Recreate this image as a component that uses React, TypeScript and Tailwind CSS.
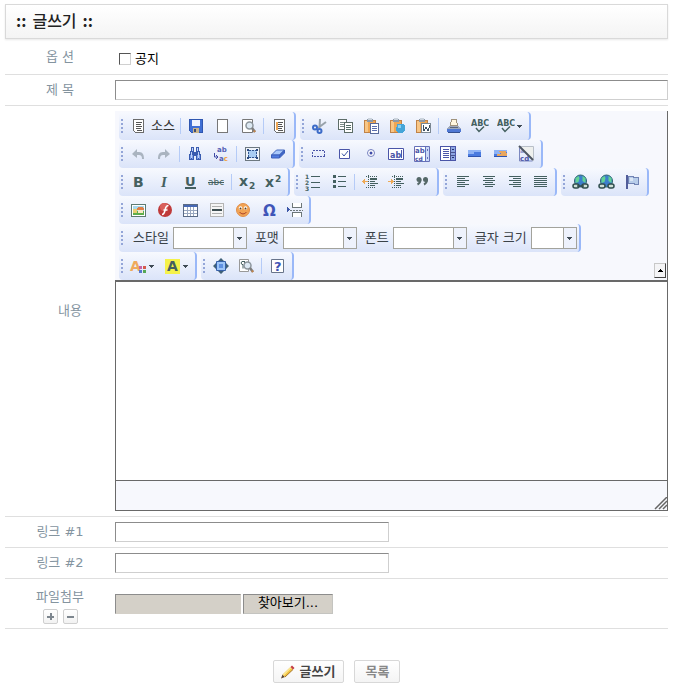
import React, { JSX, ReactNode, useState } from "react";

const INK = "#446060";
const NAVY = "#4a55a8";

const Svg = ({ children, crisp = true }: { children: ReactNode; crisp?: boolean }): JSX.Element => (
  <svg
    width="18"
    height="18"
    viewBox="0 0 18 18"
    fill="none"
    shapeRendering={crisp ? "crispEdges" : "auto"}
    fontFamily="'DejaVu Sans', sans-serif"
    fontWeight="bold"
    aria-hidden="true"
  >
    {children}
  </svg>
);

const Page = ({ accent }: { accent?: string }) => (
  <Svg>
    <path d="M4.5 2.5h10v13h-8l-2-2z" fill="#fff" stroke="#6b6b6b" />
    <path d="M7 5.5h6M7 7.5h5M7 9.5h6M7 11.5h5M8 13.5h5" stroke="#555" />
    {accent && <path d="M7 5v8" stroke={accent} strokeWidth="2" />}
  </Svg>
);

const Save = () => (
  <Svg>
    <path d="M2 2h14v14H4l-2-2z" fill="#3f6fd4" />
    <path d="M2.5 2.5h13v13h-11l-2-2z" stroke="#2f56b0" />
    <path d="M5 3h8v6H5z" fill="#eef3ff" />
    <path d="M6 11h6v5H6z" fill="#c9b48a" />
    <path d="M7 12h2v3H7z" fill="#3a4a72" />
  </Svg>
);

const NewPage = () => (
  <Svg>
    <path d="M4.5 2.5h10v13h-10z" fill="#fff" stroke="#777" />
  </Svg>
);

const Magnifier = () => (
  <>
    <circle cx="10.5" cy="8.5" r="3.5" fill="#dce8f2" stroke="#8c959c" strokeWidth="1.5" />
    <path d="M13 11l3 4" stroke="#7d7d7d" strokeWidth="2.5" />
    <path d="M15 13.5l1 1.5" stroke="#c8864a" strokeWidth="2" />
  </>
);

const Preview = () => (
  <Svg crisp={false}>
    <path d="M3.5 2.5h10v13h-10z" fill="#fff" stroke="#777" />
    <Magnifier />
  </Svg>
);

const ShowBlocks = () => (
  <Svg crisp={false}>
    <path d="M2.5 2.5h9v12h-9z" fill="#fff" stroke="#999" />
    <path d="M7 4.500h-2c-1 0-1 3 0 3h1v4M7.500 4v7" stroke="#446060" />
    <Magnifier />
  </Svg>
);

const Undo = ({ flip }: { flip?: boolean }) => (
  <Svg crisp={false}>
    <g transform={flip ? "matrix(-1 0 0 1 18 0)" : undefined}>
      <path d="M3 9l5-5v3h2c4 0 5 3 5 7h-2c0-3-1-4-3-4H8v3z" fill="#aab4c0" />
    </g>
  </Svg>
);

const Find = () => (
  <Svg>
    <path d="M5 2h3v4H5zM10 2h3v4h-3zM4 6h4v3H4zM10 6h4v3h-4zM3 9h5v6H3zM10 9h5v6h-5zM8 7h2v4H8z" fill="#3a5cb0" />
    <path d="M6 3h1v3H6zM11 3h1v3h-1zM5 7h1v6H5zM12 7h1v6h-1z" fill="#c2d5fa" />
    <path d="M4 10h1v4H4zM6 10h1v4H6zM11 10h1v4h-1zM13 10h1v4h-1z" fill="#7fa0ea" />
  </Svg>
);

const Replace = () => (
  <Svg crisp={false}>
    <text x="5" y="7" fontSize="7" fill="#5560b5">ab</text>
    <text x="7" y="16" fontSize="7" fill="#5560b5">
      a<tspan fill="#f0a040">c</tspan>
    </text>
    <path d="M2.500 8v4h3M4 10l2 2-2 2" stroke="#3f49a5" />
  </Svg>
);

const SelectAll = () => (
  <Svg>
    <path d="M2.5 2.5h14v13h-14z" fill="#eef3fa" stroke="#6d7880" />
    <path d="M5 5h9v8H5z" fill="#a9cdf3" />
    <path d="M5.5 5.5h8v7h-8z" stroke="#33558f" strokeDasharray="2 1" />
    <path d="M4 4h2v2H4zM13 4h2v2h-2zM4 12h2v2H4zM13 12h2v2h-2z" fill="#2d4b80" />
  </Svg>
);

const Eraser = () => (
  <Svg crisp={false}>
    <path d="M7.5 5h8l-5 5h-8z" fill="#a9c8fa" stroke="#4468bd" />
    <path d="M2.5 10h8v3h-8z" fill="#4f7be0" stroke="#3d5fba" />
    <path d="M10.5 10l5-5v3l-5 5z" fill="#3f66c8" stroke="#3d5fba" />
  </Svg>
);

const Cut = () => (
  <Svg crisp={false}>
    <path d="M10 2l-.5 9M16 5L8 11" stroke="#98a2aa" strokeWidth="2" />
    <circle cx="5" cy="10.500" r="2" stroke="#3d6cc8" strokeWidth="2" />
    <circle cx="9.500" cy="14" r="2" stroke="#3d6cc8" strokeWidth="2" />
  </Svg>
);

const Copy = () => (
  <Svg>
    <path d="M2.5 2.5h8v10h-8z" fill="#fff" stroke="#5d6d68" />
    <path d="M4 5.5h5M4 7.5h4M4 9.5h4" stroke="#7b8b86" />
    <path d="M8.5 5.5h8v10h-8z" fill="#fff" stroke="#5d6d68" />
    <path d="M10 8.5h5M10 10.5h5M10 12.5h5" stroke="#557068" />
  </Svg>
);

const Paste = ({ kind }: { kind: "page" | "text" | "word" }) => (
  <Svg>
    <path d="M2.5 3.5h11v12h-11z" fill="#efa653" stroke="#c08348" />
    <path d="M3 4h3v11H3z" fill="#f8c686" />
    <path d="M5 2h6v3H5z" fill="#8c99a8" />
    <path d="M6 1h4v2H6z" fill="#cbd3dc" />
    {kind === "page" && (
      <>
        <path d="M8.5 6.5h8v10h-8z" fill="#fff" stroke="#586a9a" />
        <path d="M10 9.5h5M10 11.5h5M10 13.5h5" stroke="#5a6dae" />
      </>
    )}
    {kind === "text" && (
      <>
        <path d="M9 7h6l2 2v5l-3 2h-4l-2-3z" fill="#45a5d8" />
        <path d="M10 8h3v3h-3z" fill="#8bd0ef" />
      </>
    )}
    {kind === "word" && (
      <>
        <path d="M7.5 6.5h9v9h-9z" fill="#fff" stroke="#7b8792" />
        <path d="M9 8v3l1 3 2-4 2 4 1-3V8" stroke="#3d4f60" />
      </>
    )}
  </Svg>
);

const Print = () => (
  <Svg>
    <path d="M6.5 2.5h5l1 6h-7z" fill="#fff6df" stroke="#a0937c" />
    <path d="M4 9h10l2 3H2z" fill="#a0aabd" />
    <path d="M2 12h14v3H2z" fill="#4f78d4" />
    <path d="M3 15h12v1H3z" fill="#34508f" />
    <path d="M5 10h8v1H5z" fill="#5b6578" />
  </Svg>
);

const Spell = () => (
  <Svg crisp={false}>
    <text x="0" y="9" fontSize="8" fill={INK}>ABC</text>
    <path d="M5 11l3 3.500 5-5" stroke={INK} strokeWidth="1.5" />
  </Svg>
);

const FormIcon = () => (
  <Svg>
    <path d="M3.500 5.500h12v6h-12z" stroke={NAVY} strokeDasharray="2 1" />
  </Svg>
);

const CheckIcon = () => (
  <Svg crisp={false}>
    <path d="M4.5 4.5h10v9h-10z" fill="#fff" stroke={NAVY} />
    <path d="M7 8.500l2 2.500 4-5" stroke="#3b55a5" />
  </Svg>
);

const RadioIcon = () => (
  <Svg crisp={false}>
    <circle cx="10" cy="8" r="3.5" fill="#fff" stroke="#7580c0" />
    <circle cx="10" cy="8" r="1.5" fill="#3f4ba8" />
  </Svg>
);

const FieldIcon = () => (
  <Svg crisp={false}>
    <path d="M1.500 3.500h15v11h-15z" fill="#fff" stroke={NAVY} />
    <text x="3" y="13" fontSize="8" fill={NAVY}>ab</text>
    <path d="M14.500 5v8" stroke={NAVY} />
  </Svg>
);

const AreaIcon = () => (
  <Svg crisp={false}>
    <path d="M1.500 1.500h15v15h-15z" fill="#fff" stroke="#6570b8" />
    <text x="2" y="8" fontSize="7" fill={NAVY}>ab</text>
    <text x="2" y="16" fontSize="6" fill={NAVY}>cd</text>
    <path d="M12.500 2v14" stroke="#6570b8" />
    <path d="M13 2h3v14h-3z" fill="#c9d8f7" />
    <path d="M14 4h1v2h-1zM14 12h1v2h-1z" fill="#6570b8" />
  </Svg>
);

const ListFieldIcon = () => (
  <Svg>
    <path d="M1.5 1.5h15v14h-15z" fill="#fff" stroke={NAVY} />
    <path d="M4 4.5h6M4 6.5h6M4 8.5h6M4 10.5h6M4 12.5h6" stroke={NAVY} />
    <path d="M12 2h4v13h-4z" fill="#8ca5e3" />
    <path d="M13 4h2v1h-2zM13 12h2v1h-2z" fill="#26356f" />
    <path d="M12 7.5h4M12 10.5h4M11.500 2v13" stroke="#4a5590" />
  </Svg>
);

const ButtonIcon = ({ picture }: { picture?: boolean }) => (
  <Svg>
    <path d="M3 5h13v7H3z" fill="#4a7be0" />
    <path d="M3 5h13v2H3zM3 7h6v2H3z" fill="#8fb3f5" />
    <path d="M3 11h13v1H3z" fill="#2f54b0" />
    {picture && <path d="M8 6h7v2h1v3H6V9h4z" fill="#e9a75f" />}
  </Svg>
);

const HiddenIcon = () => (
  <Svg crisp={false}>
    <path d="M2.500 3v13h13" stroke="#7c88c0" />
    <text x="3" y="8" fontSize="6" fill="#8a94c8">a</text>
    <text x="3" y="16" fontSize="7" fill={NAVY}>cd</text>
    <path d="M3 1.500h13.500v14z" fill="#eef0ee" stroke="#b8bfc8" />
    <path d="M2 1l14 14" stroke="#4d5662" strokeWidth="2" />
  </Svg>
);

const Glyph = ({ kind }: { kind: string }) => (
  <Svg crisp={false}>
    {kind === "B" && <text x="4" y="14" fontSize="14" fill={INK}>B</text>}
    {kind === "I" && <text x="6" y="14" fontSize="15" fill={INK} fontStyle="italic" fontFamily="'Liberation Serif', serif">I</text>}
    {kind === "U" && (
      <>
        <text x="4" y="13" fontSize="13" fill={INK}>U</text>
        <path d="M4 15h11" stroke={INK} strokeWidth="2" />
      </>
    )}
    {kind === "S" && (
      <>
        <text x="1" y="12" fontSize="9" fontWeight="normal" fill={INK}>abc</text>
        <path d="M1 9.5h16" stroke={INK} />
      </>
    )}
    {(kind === "sub" || kind === "sup") && (
      <>
        <text x="1" y={kind === "sub" ? 13 : 14} fontSize="14" fill={INK}>x</text>
        <text x="11" y={kind === "sub" ? 16 : 9} fontSize="9" fill={INK}>2</text>
      </>
    )}
  </Svg>
);

const NumberList = () => (
  <Svg crisp={false}>
    <text x="1" y="6" fontSize="6" fill={INK}>1</text>
    <text x="1" y="12" fontSize="6" fill={INK}>2</text>
    <text x="1" y="18" fontSize="6" fill={INK}>3</text>
    <path d="M7 3.5h9M7 9.5h9M7 14.5h9" stroke={INK} />
  </Svg>
);

const BulletList = () => (
  <Svg>
    <path d="M3 2h3v3H3zM3 7h3v3H3zM3 12h3v3H3z" fill={INK} />
    <path d="M8 3.5h8M8 8.5h8M8 13.5h8" stroke={INK} />
  </Svg>
);

const Indent = ({ out }: { out?: boolean }) => (
  <Svg>
    <path d="M5 3.5h12M5 14.5h9" stroke={INK} strokeDasharray="1 1" />
    <path d="M9 5h7v2H9zM9 8h5v1H9zM9 10h8v1H9zM9 12h5v1H9z" fill={INK} />
    <path d="M7.5 2v13" stroke={INK} strokeDasharray="1 1" />
    {out ? (
      <path d="M1 8.5h6M3.5 6v5M2.5 7v3" stroke="#efaa57" />
    ) : (
      <path d="M1 8.5h6M4.5 6v5M5.5 7v3" stroke="#efaa57" />
    )}
  </Svg>
);

const Quote = () => (
  <Svg crisp={false}>
    <circle cx="6" cy="6.5" r="2.5" fill="#556868" />
    <circle cx="12.5" cy="6.5" r="2.5" fill="#556868" />
    <path d="M7.500 6.500c0 2.500-1 4-3 5M14 6.500c0 2.500-1 4-3 5" stroke="#556868" strokeWidth="2" />
  </Svg>
);

const Align = ({ d }: { d: string }) => (
  <Svg>
    <path d={d} stroke={INK} />
  </Svg>
);

const Link = ({ broken }: { broken?: boolean }) => (
  <Svg crisp={false}>
    <circle cx="9.5" cy="8" r="6" fill="#3d7fcb" stroke="#2d6570" />
    <path d="M4.500 5l3-2 1 2-1 4-3 1zM11.500 3l3 2v5l-3-2z" fill="#63d394" />
    <rect x="2" y="11" width="6" height="4" rx="2" fill="#cfe0d8" stroke="#304e4e" strokeWidth="1.5" />
    <rect x="11" y="11" width="6" height="4" rx="2" fill="#cfe0d8" stroke="#304e4e" strokeWidth="1.5" />
    {!broken && <path d="M6 13h7" stroke="#304e4e" strokeWidth="1.5" />}
  </Svg>
);

const Anchor = () => (
  <Svg>
    <path d="M3 2h2v14H3z" fill="#525d9a" />
    <path d="M5.5 3.5h5v1h5v7h-4v-1h-6z" fill="#b8cdea" stroke="#7184b5" />
    <path d="M7 5h3v3H7z" fill="#dae6f5" />
  </Svg>
);

const Picture = () => (
  <Svg>
    <path d="M2.5 3.5h14v12h-14z" fill="#fff" stroke="#5d7a72" />
    <path d="M4 5h11v5H4z" fill="#a8d8ed" />
    <path d="M4 10h11v4H4z" fill="#5fae4c" />
    <path d="M4 8h4v4H4z" fill="#e8cf72" />
    <path d="M9 6h5v1h1v2H8V7h1z" fill="#df7e48" />
    <path d="M9 9h5v3H9z" fill="#f8e8c8" />
  </Svg>
);

const Flash = () => (
  <Svg crisp={false}>
    <circle cx="10" cy="9" r="7" fill="#bf3a3a" />
    <circle cx="9" cy="6" r="4" fill="#d9605c" />
    <path d="M13.500 4.500c-3 0-3 3-3.500 5s-1 4-3 4M8.500 9h4" stroke="#fff" strokeWidth="1.5" />
  </Svg>
);

const TableIcon = () => (
  <Svg>
    <path d="M2.5 3.5h14v12h-14z" fill="#fff" stroke="#5a6a85" />
    <path d="M3 4h13v2H3z" fill="#4668b5" />
    <path d="M3 9.5h13M3 12.5h13M6.5 6v9M9.5 6v9M12.5 6v9" stroke="#9aa8c0" />
  </Svg>
);

const Rule = () => (
  <Svg>
    <path d="M3.5 2.5h13v13h-13z" fill="#f5f5f5" stroke="#b4b4b4" />
    <path d="M5 5.5h10M5 12.5h10" stroke="#b0b0b0" />
    <path d="M5 9h10" stroke="#3d4d50" strokeWidth="2" />
  </Svg>
);

const Smiley = () => (
  <Svg crisp={false}>
    <circle cx="10" cy="9" r="6.5" fill="#f2a354" stroke="#e08f4c" />
    <circle cx="7.5" cy="7" r="1.800" fill="#fff" />
    <circle cx="12.500" cy="7" r="1.800" fill="#fff" />
    <circle cx="7.500" cy="7.500" r="1" fill="#604020" />
    <circle cx="12.500" cy="7.500" r="1" fill="#604020" />
    <path d="M6.500 11c2 2.500 5 2.500 7 0" stroke="#a83e28" />
  </Svg>
);

const Omega = () => (
  <Svg crisp={false}>
    <text x="4" y="15" fontSize="15" fill="#3f55b8">Ω</text>
  </Svg>
);

const PageBreak = () => (
  <Svg>
    <path d="M7.5 2v4.5h9V2M7.5 16v-4.5h9V16" fill="#fff" stroke="#6c7678" />
    <path d="M5 9h13" stroke="#6c7678" strokeDasharray="2 1" />
    <path d="M2 6v5l3-2.5z" fill="#3d57a8" />
  </Svg>
);

const TextColor = () => (
  <Svg crisp={false}>
    <text x="1" y="14" fontSize="14" fill="#efaa5c">A</text>
    <path d="M10 9h3v3h-3z" fill="#c565a8" />
    <path d="M14 9h3v3h-3z" fill="#d55a4b" />
    <path d="M10 13h3v3h-3z" fill="#5876cf" />
    <path d="M14 13h3v3h-3z" fill="#56a854" />
  </Svg>
);

const BackColor = () => (
  <Svg crisp={false}>
    <path d="M2 2h15v15H2z" fill="#f5f24a" />
    <text x="4" y="14" fontSize="14" fill={INK}>A</text>
  </Svg>
);

const Maximize = () => (
  <Svg crisp={false}>
    <path d="M10 1l3 3H7zM10 17l3-3H7zM2 9l3-3v6zM18 9l-3-3v6z" fill="#3f6077" />
    <path d="M5.5 4.5h9v9h-9z" fill="#9cc4f8" stroke="#3560a8" />
    <path d="M8 7h4v4H8z" fill="#5f91e2" />
  </Svg>
);

const About = () => (
  <Svg crisp={false}>
    <path d="M3.5 2.5h12v13h-12z" fill="#fff" stroke="#68748a" />
    <text x="6" y="14" fontSize="13" fill="#4053b5">?</text>
  </Svg>
);

const Pencil = () => (
  <svg width="16" height="16" viewBox="0 0 16 16" aria-hidden="true">
    <path d="M1 14.500l1.500-4L5 13z" fill="#5a4432" />
    <path d="M2.500 10.500L10.500 3 13 5.500 5 13z" fill="#f2c443" />
    <path d="M3 10.500L10.500 3l1 1L4 11.500z" fill="#fbe795" />
    <path d="M5 13l8-7.500" stroke="#a87628" />
    <path d="M10.500 3l1.500-1.500 2.500 2.500L13 5.500z" fill="#c23b42" />
  </svg>
);

const Caret = () => (
  <svg width="5" height="3" viewBox="0 0 5 3" shapeRendering="crispEdges" aria-hidden="true">
    <path d="M0 0h5v1H4v1H3v1H2V2H1V1H0z" fill="#3f4b55" />
  </svg>
);

const Tool = ({ title, children }: { title: string; children: ReactNode }) => (
  <button type="button" title={title} className="flex h-7 w-[26px] items-center justify-center">
    {children}
  </button>
);

const MenuTool = ({ title, children }: { title: string; children: ReactNode }) => (
  <button type="button" title={title} className="flex h-7 w-[34px] items-center gap-0.5 pl-1">
    {children}
    <Caret />
  </button>
);

const Sep = () => (
  <span className="flex w-[5px] justify-center">
    <span className="h-4 w-px bg-[#b5cbf7]" />
  </span>
);

const Group = ({ children }: { children: ReactNode }) => (
  <div className="flex h-7 items-center rounded-[4px] border-r-2 border-[#9ab8f8] bg-linear-to-b from-[#f7f9fe] to-[#dbe4f9] pr-0.5">
    <span className="flex w-1.5 flex-col items-center gap-0.5">
      <span className="size-0.5 bg-[#94a6d8]" />
      <span className="size-0.5 bg-[#94a6d8]" />
      <span className="size-0.5 bg-[#94a6d8]" />
      <span className="size-0.5 bg-[#94a6d8]" />
    </span>
    {children}
  </div>
);

const Row = ({ children }: { children: ReactNode }) => <div className="flex gap-1">{children}</div>;

const Combo = ({ id, label, small }: { id: string; label: string; small?: boolean }) => (
  <div className="flex items-center gap-1 pl-2 text-[#3a4248]">
    <label htmlFor={id} className="whitespace-nowrap">{label}</label>
    <div className="relative flex">
      <select
        id={id}
        className={
          small
            ? "h-[22px] w-[46px] appearance-none border border-[#a3a39c] bg-white"
            : "h-[22px] w-[74px] appearance-none border border-[#a3a39c] bg-white"
        }
      />
      <span className="pointer-events-none absolute inset-y-px right-px flex w-[13px] items-center justify-center border-l border-[#a3a39c] bg-[#eef2fc]">
        <Caret />
      </span>
    </div>
  </div>
);

const field = "h-5 border border-[#cfcfcf] border-t-[#8c8c8c] border-l-[#8c8c8c] bg-white px-1 outline-none";
const labelCell = "w-[110px] shrink-0 text-center text-[#84949f]";
const line = "flex items-center border-b border-[#dfdfdf]";
const miniButton =
  "flex size-[15px] items-center justify-center rounded-[2px] border border-[#cfcfcf] bg-linear-to-b from-white to-[#f2f2f2]";
const bigButton =
  "flex h-[23px] items-center rounded-[2px] border border-[#d8d8d8] bg-linear-to-b from-white to-[#f4f4f4] font-bold";

const Toolbar = () => (
  <div className="relative border-r border-b-2 border-[#696969] bg-[#f7f8fd] pt-px pl-1">
    <Row>
      <Group>
        <button type="button" className="flex h-7 w-[53px] items-center gap-1 pl-1 whitespace-nowrap text-[#333]">
          <Page />
          <span>소스</span>
        </button>
        <Sep />
        <Tool title="저장"><Save /></Tool>
        <Tool title="새 문서"><NewPage /></Tool>
        <Tool title="미리보기"><Preview /></Tool>
        <Sep />
        <Tool title="템플릿"><Page accent="#efa653" /></Tool>
      </Group>
      <Group>
        <Tool title="잘라내기"><Cut /></Tool>
        <Tool title="복사하기"><Copy /></Tool>
        <Tool title="붙여넣기"><Paste kind="page" /></Tool>
        <Tool title="텍스트로 붙여넣기"><Paste kind="text" /></Tool>
        <Tool title="MS Word 형식에서 붙여넣기"><Paste kind="word" /></Tool>
        <Sep />
        <Tool title="인쇄하기"><Print /></Tool>
        <Tool title="철자검사"><Spell /></Tool>
        <MenuTool title="자동 철자검사"><Spell /></MenuTool>
      </Group>
    </Row>
    <Row>
      <Group>
        <Tool title="취소"><Undo /></Tool>
        <Tool title="재실행"><Undo flip /></Tool>
        <Sep />
        <Tool title="찾기"><Find /></Tool>
        <Tool title="바꾸기"><Replace /></Tool>
        <Sep />
        <Tool title="전체선택"><SelectAll /></Tool>
        <Tool title="포맷 지우기"><Eraser /></Tool>
      </Group>
      <Group>
        <Tool title="폼"><FormIcon /></Tool>
        <Tool title="체크박스"><CheckIcon /></Tool>
        <Tool title="라디오버튼"><RadioIcon /></Tool>
        <Tool title="입력필드"><FieldIcon /></Tool>
        <Tool title="입력영역"><AreaIcon /></Tool>
        <Tool title="펼침목록"><ListFieldIcon /></Tool>
        <Tool title="버튼"><ButtonIcon /></Tool>
        <Tool title="이미지버튼"><ButtonIcon picture /></Tool>
        <Tool title="숨김필드"><HiddenIcon /></Tool>
      </Group>
    </Row>
    <Row>
      <Group>
        <Tool title="진하게"><Glyph kind="B" /></Tool>
        <Tool title="이텔릭"><Glyph kind="I" /></Tool>
        <Tool title="밑줄"><Glyph kind="U" /></Tool>
        <Tool title="취소선"><Glyph kind="S" /></Tool>
        <Sep />
        <Tool title="아래 첨자"><Glyph kind="sub" /></Tool>
        <Tool title="위 첨자"><Glyph kind="sup" /></Tool>
      </Group>
      <Group>
        <Tool title="순서있는 목록"><NumberList /></Tool>
        <Tool title="순서없는 목록"><BulletList /></Tool>
        <Sep />
        <Tool title="내어쓰기"><Indent out /></Tool>
        <Tool title="들여쓰기"><Indent /></Tool>
        <Tool title="인용"><Quote /></Tool>
      </Group>
      <Group>
        <Tool title="왼쪽 정렬"><Align d="M4 3.5h12M4 5.5h8M4 7.5h12M4 9.5h8M4 11.5h12M4 13.5h8" /></Tool>
        <Tool title="가운데 정렬"><Align d="M4 3.5h12M6 5.5h8M4 7.5h12M6 9.5h8M4 11.5h12M6 13.5h8" /></Tool>
        <Tool title="오른쪽 정렬"><Align d="M4 3.5h12M8 5.5h8M4 7.5h12M8 9.5h8M4 11.5h12M8 13.5h8" /></Tool>
        <Tool title="양쪽 맞춤"><Align d="M3 3.5h13M3 5.5h13M3 7.5h13M3 9.5h13M3 11.5h13M3 13.5h13" /></Tool>
      </Group>
      <Group>
        <Tool title="링크 삽입"><Link /></Tool>
        <Tool title="링크 삭제"><Link broken /></Tool>
        <Tool title="책갈피"><Anchor /></Tool>
      </Group>
    </Row>
    <Row>
      <Group>
        <Tool title="이미지"><Picture /></Tool>
        <Tool title="플래쉬"><Flash /></Tool>
        <Tool title="표"><TableIcon /></Tool>
        <Tool title="수평선"><Rule /></Tool>
        <Tool title="아이콘"><Smiley /></Tool>
        <Tool title="특수문자"><Omega /></Tool>
        <Tool title="페이지 나누기"><PageBreak /></Tool>
      </Group>
    </Row>
    <Row>
      <Group>
        <Combo id="style" label="스타일" />
        <Combo id="format" label="포맷" />
        <Combo id="font" label="폰트" />
        <Combo id="size" label="글자 크기" small />
      </Group>
    </Row>
    <Row>
      <Group>
        <MenuTool title="글자 색상"><TextColor /></MenuTool>
        <MenuTool title="배경 색상"><BackColor /></MenuTool>
      </Group>
      <Group>
        <Tool title="최대화"><Maximize /></Tool>
        <Tool title="블럭 보기"><ShowBlocks /></Tool>
        <Sep />
        <Tool title="에디터 정보"><About /></Tool>
      </Group>
    </Row>
    <button
      type="button"
      title="툴바 줄이기"
      className="absolute right-px bottom-0.5 flex h-[15px] w-3 items-center justify-center border border-[#c8c8c8] border-r-[#444] border-b-[#444] bg-[#f4f4f6]"
    >
      <svg width="5" height="3" viewBox="0 0 5 3" shapeRendering="crispEdges" aria-hidden="true">
        <path d="M2 0h1v1h1v1h1v1H0V2h1V1h1z" fill="#000" />
      </svg>
    </button>
  </div>
);

export default function App(): JSX.Element {
  const [notice, setNotice] = useState(false);

  return (
    <form
      className="bg-white pt-1 pr-[11px] pl-[5px] font-['DejaVu_Sans','Noto_Sans_CJK_KR',sans-serif] text-[13px] leading-4 text-black"
      onSubmit={(e) => e.preventDefault()}
    >
      <h1 className="flex h-[35px] items-center gap-1.5 border border-[#d9d9d9] bg-linear-to-b from-white to-[#f4f4f4] pb-1 pl-2.5 font-['Noto_Sans_CJK_KR',sans-serif] text-base font-medium text-[#222] shadow-[0_1px_2px_#e8e8e8]">
        <span className="font-bold">::</span>
        <span>글쓰기</span>
        <span className="font-bold">::</span>
      </h1>

      <div className={`${line} h-9`}>
        <span className={labelCell}>옵 션</span>
        <div className="flex items-center gap-1 pt-1 pl-1">
          <input
            id="notice"
            type="checkbox"
            checked={notice}
            onChange={(e) => setNotice(e.target.checked)}
            className="size-3 appearance-none border border-[#d0d0d0] border-t-[#555] border-l-[#555] bg-white checked:bg-[#555]"
          />
          <label htmlFor="notice">공지</label>
        </div>
      </div>

      <div className={`${line} h-[31px]`}>
        <label htmlFor="subject" className={labelCell}>제 목</label>
        <input id="subject" type="text" className={`${field} min-w-0 flex-1`} />
      </div>

      <div className={`${line} py-[5px]`}>
        <label htmlFor="content" className={`${labelCell} pl-5`}>내용</label>
        <div className="min-w-0 flex-1">
          <Toolbar />
          <textarea
            id="content"
            className="block h-[198px] w-full resize-none border-x border-[#696969] bg-white p-2 outline-none"
          />
          <div className="flex h-[31px] items-end justify-end border border-[#696969] bg-[#f7f8fd]">
            <svg width="13" height="13" viewBox="0 0 13 13" fill="none" aria-hidden="true">
              <path d="M1 12L13 0M5 12l8-8M9 12l4-4" stroke="#666" strokeWidth="1.5" />
            </svg>
          </div>
        </div>
      </div>

      <div className={`${line} h-[31px]`}>
        <label htmlFor="link1" className={labelCell}>링크 #1</label>
        <input id="link1" type="text" className={`${field} w-[274px]`} />
      </div>

      <div className={`${line} h-[31px]`}>
        <label htmlFor="link2" className={labelCell}>링크 #2</label>
        <input id="link2" type="text" className={`${field} w-[274px]`} />
      </div>

      <div className={`${line} h-[50px]`}>
        <div className={`${labelCell} pt-1.5`}>
          <label htmlFor="file">파일첨부</label>
          <div className="mt-1 flex justify-center gap-[5px]">
            <button type="button" title="추가" className={miniButton}>
              <svg width="7" height="7" viewBox="0 0 7 7" shapeRendering="crispEdges" aria-hidden="true">
                <path d="M0 3h7v2H0zM3 0h2v7H3z" fill="#7d868e" />
              </svg>
            </button>
            <button type="button" title="삭제" className={miniButton}>
              <svg width="7" height="7" viewBox="0 0 7 7" shapeRendering="crispEdges" aria-hidden="true">
                <path d="M0 3h7v2H0z" fill="#7d868e" />
              </svg>
            </button>
          </div>
        </div>
        <div className="flex gap-0.5">
          <input
            id="file"
            type="text"
            readOnly
            className="h-5 w-[126px] border border-[#d4d0c8] border-t-[#8c8c8c] border-l-[#8c8c8c] bg-[#d4d0c8] px-1 outline-none"
          />
          <button
            type="button"
            className="flex h-5 w-[90px] items-center justify-center border border-[#c4c4c0] border-t-[#8c8c8c] border-l-[#8c8c8c] bg-[#d4d0c8] pb-0.5"
          >
            찾아보기...
          </button>
        </div>
      </div>

      <div className="flex justify-center gap-2.5 pt-[31px]">
        <button type="submit" className={`${bigButton} gap-1 pr-2 pl-1.5 text-[#444]`}>
          <Pencil />
          <span>글쓰기</span>
        </button>
        <button type="button" className={`${bigButton} px-2.5 text-[#888]`}>목록</button>
      </div>
    </form>
  );
}
